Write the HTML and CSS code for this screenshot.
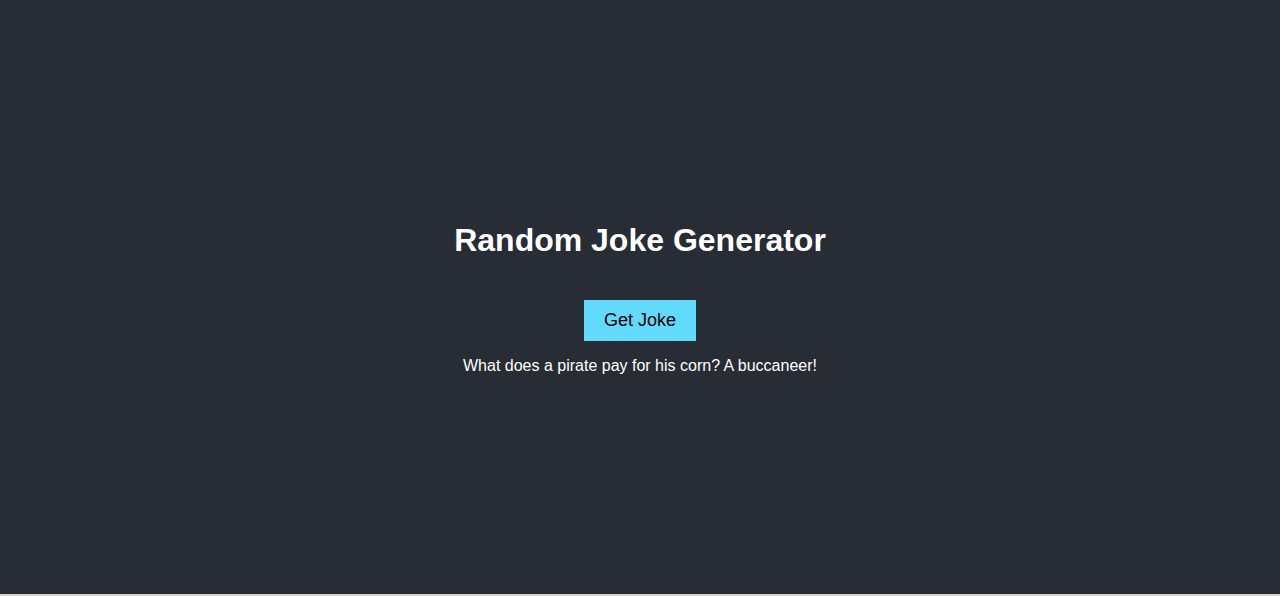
FILE: index.html
```html
<!DOCTYPE html>
<html lang="en">
<head>
<meta charset="utf-8">
<title>Random Joke Generator</title>
<link rel="stylesheet" href="styles.css">
</head>
<body>
<main class="app">
  <h1 class="title">Random Joke Generator</h1>
  <button class="joke-btn" type="button">Get Joke</button>
  <p class="joke">What does a pirate pay for his corn? A buccaneer!</p>
</main>
<div class="strip"></div>
</body>
</html>
```
FILE: styles.css
```css
html, body {
  margin: 0;
  padding: 0;
  background: #dcdcdc;
  overflow: hidden;
}
.app {
  box-sizing: border-box;
  height: calc(100vh - 2px);
  padding-top: 2px;
  background: #282c34;
  color: #ffffff;
  display: flex;
  flex-direction: column;
  align-items: center;
  justify-content: center;
  font-family: "Liberation Sans", Arial, sans-serif;
}
.title {
  margin: 0 0 41px;
  font-size: 32px;
  font-weight: bold;
}
.joke-btn {
  font-family: "Liberation Sans", Arial, sans-serif;
  font-size: 18px;
  padding: 10px 20px;
  background: #61dafb;
  color: #000;
  border: none;
  cursor: pointer;
}
.joke {
  margin: 16px 0 0;
  font-size: 16px;
}
.strip {
  height: 2px;
  background: #d4d4d4;
}
```
